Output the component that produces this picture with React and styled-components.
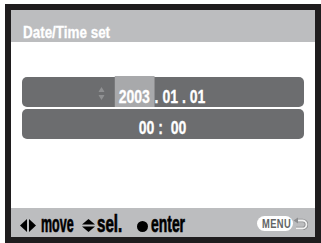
import React from "react";
import styled, { createGlobalStyle } from "styled-components";

const Global = createGlobalStyle`
  html, body { margin: 0; padding: 0; background: #ffffff; }
  body { width: 321px; height: 243px; overflow: hidden; font-family: "Liberation Sans", Arial, sans-serif; }
`;

const Frame = styled.div`
  box-sizing: border-box;
  margin: 4px 0 0 5px;
  width: 316px;
  height: 239px;
  border: 6px solid #1f1d1e;
  background: #ffffff;
  display: flex;
  flex-direction: column;
`;

const TitleBar = styled.div`
  box-sizing: border-box;
  height: 32px;
  background: #bcbdbf;
  display: flex;
  align-items: flex-end;
  padding: 0 0 1px 12px;
  color: #ffffff;
  font: bold 17px/1 "Liberation Sans", Arial, sans-serif;
  -webkit-text-stroke: 0.3px #ffffff;
`;

const Squash = styled.span`
  display: inline-block;
  white-space: pre;
  transform: scaleX(${(p) => p.$s});
  transform-origin: left center;
`;

const Content = styled.div`
  flex: 1;
  display: flex;
  flex-direction: column;
  gap: 2px;
  padding: 35px 11px 0;
`;

const Row = styled.div`
  height: 30px;
  background: #6c6d6f;
  border-radius: 5px;
  display: flex;
  justify-content: center;
  align-items: stretch;
  color: #ffffff;
  font: bold 18px/1 "Liberation Sans", Arial, sans-serif;
  -webkit-text-stroke: 0.3px #ffffff;
`;

const RowText = styled.div`
  display: flex;
  align-items: stretch;
  white-space: pre;
  transform: scaleX(0.78);
  margin-right: ${(p) => p.$shift || 0}px;
`;

const Seg = styled.div`
  display: flex;
  align-items: flex-end;
  padding-bottom: ${(p) => p.$pb}px;
`;

const Field = styled(Seg)`
  position: relative;
  background: #a8a9ab;
  margin-top: -1px;
  padding-left: 5px;
  padding-right: 6px;
`;

const SpinArrows = styled.svg`
  position: absolute;
  right: calc(100% + 13px);
  top: 11px;
`;

const BottomBar = styled.div`
  box-sizing: border-box;
  height: 29px;
  background: #bcbdbf;
  display: flex;
  align-items: center;
  padding: 0 7px 0 9px;
  color: #000000;
`;

const Label = styled.span`
  display: block;
  box-sizing: border-box;
  width: ${(p) => p.$w}px;
  margin-left: ${(p) => p.$ml}px;
  padding-top: 2px;
  font: bold 24px/1 "Liberation Sans", Arial, sans-serif;
  white-space: nowrap;
  -webkit-text-stroke: 0.7px #000;
`;

const Icon = styled.svg`
  display: block;
  flex-shrink: 0;
  margin-left: ${(p) => p.$ml || 0}px;
  margin-top: ${(p) => p.$mt || 0}px;
`;

const Dot = styled.span`
  display: block;
  width: 11px;
  height: 11px;
  border-radius: 50%;
  background: #000;
  margin-left: ${(p) => p.$ml}px;
  margin-top: 7px;
`;

const MenuPill = styled.span`
  margin-left: auto;
  margin-top: 2px;
  box-sizing: border-box;
  width: 36px;
  height: 15px;
  border-radius: 8px;
  background: #ffffff;
  display: flex;
  align-items: center;
  padding-left: 5px;
  color: #636466;
  font: bold 13px/1 "Liberation Sans", Arial, sans-serif;
  letter-spacing: 0.5px;
`;

function Text({ s, children }) {
  return <Squash $s={s}>{children}</Squash>;
}

export default function App() {
  return (
    <>
      <Global />
      <Frame>
        <TitleBar>
          <Text s={0.79}>Date/Time set</Text>
        </TitleBar>
        <Content>
          <Row>
            <RowText $shift={6}>
              <Field $pb={1}>
                <SpinArrows width="8" height="13" viewBox="0 0 8 13" preserveAspectRatio="none">
                  <polygon points="4,0 8,5 0,5" fill="#8f9092" />
                  <polygon points="0,8 8,8 4,13" fill="#8f9092" />
                </SpinArrows>
                2003
              </Field>
              <Seg $pb={1}>. 01 . 01</Seg>
            </RowText>
          </Row>
          <Row>
            <RowText>
              <Seg $pb={2}>00 :  00</Seg>
            </RowText>
          </Row>
        </Content>
        <BottomBar>
          <Icon width="16" height="13" viewBox="0 0 16 13" $mt={6}>
            <polygon points="7,0 7,13 0,6.5" fill="#000" />
            <polygon points="9,0 16,6.5 9,13" fill="#000" />
          </Icon>
          <Label $w={32} $ml={5}>
            <Text s={0.52}>move</Text>
          </Label>
          <Icon width="13" height="13" viewBox="0 0 13 13" $ml={9} $mt={6}>
            <polygon points="6.5,0 13,5.5 0,5.5" fill="#000" />
            <polygon points="0,7.5 13,7.5 6.5,13" fill="#000" />
          </Icon>
          <Label $w={25} $ml={2}>
            <Text s={0.63}>sel.</Text>
          </Label>
          <Dot $ml={15} />
          <Label $w={34} $ml={3}>
            <Text s={0.58}>enter</Text>
          </Label>
          <MenuPill>
            <Text s={0.72}>MENU</Text>
          </MenuPill>
          <Icon width="15" height="13" viewBox="0 0 15 13" $mt={2}>
            <path d="M4 3.5 H9.5 A4 4 0 0 1 9.5 11.5 H3" fill="none" stroke="#8d8e90" strokeWidth="3.6" />
            <path d="M4 3.5 H9.5 A4 4 0 0 1 9.5 11.5 H3" fill="none" stroke="#f2f2f2" strokeWidth="1.8" />
            <polygon points="0.5,3.5 5,0.5 5,6.5" fill="#8d8e90" />
          </Icon>
        </BottomBar>
      </Frame>
    </>
  );
}
